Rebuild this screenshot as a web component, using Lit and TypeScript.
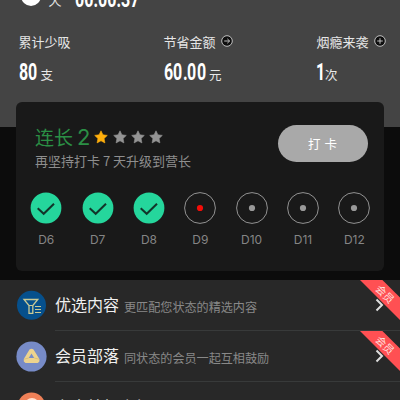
import { LitElement, html, svg, css } from "lit";
import { customElement, property } from "lit/decorators.js";

const FONT = css`"Liberation Sans", "Noto Sans CJK SC", sans-serif`;

@customElement("stat-item")
class StatItem extends LitElement {
  @property() label = "";
  @property() value = "";
  @property() unit = "";
  @property() icon = "";
  static styles = css`
    :host { display: block; color: #f2f2f2; font-family: "Noto Sans CJK SC", sans-serif; }
    .label { display: flex; align-items: center; gap: 5px; height: 20px; font-size: 13px; white-space: nowrap; color: #e6e6e6; }
    .value { display: flex; align-items: baseline; height: 30px; margin-top: 6px; line-height: 30px; }
    .number { display: inline-flex; font: 700 23.5px/30px Roboto, sans-serif; color: #fff; }
    .number span { display: block; width: 9.5px; }
    .number .dot { width: 4.6px; }
    .number .narrow { width: 7px; }
    .number i { display: block; font-style: normal; transform: scaleX(0.68); transform-origin: 0 50%; }
    .narrow i { margin-left: -1px; }
    .unit { font-size: 12.5px; margin-left: 3px; color: #e8e8e8; }
    .tight { margin-left: 1.5px; }
    svg { display: block; }
  `;
  render() {
    const glyph = this.icon === "plus"
      ? svg`<path d="M3.2 6h5.6M6 3.2v5.6" />`
      : svg`<path d="M3.2 6h5.4M6.3 3.8 8.6 6 6.3 8.2" />`;
    return html`
      <div class="label">${this.label}${this.icon
        ? html`<svg width="12" height="12" viewBox="0 0 12 12" fill="#0e0e0e" stroke="#d0d0d0" stroke-width=".9"><circle cx="6" cy="6" r="5.3" />${glyph}</svg>`
        : ""}</div>
      <div class="value">
        <div class="number">${[...this.value].map((c) => html`<span class=${c === "." ? "dot" : c === "1" ? "narrow" : ""}><i>${c}</i></span>`)}</div>
        <span class="unit ${this.value === "1" ? "tight" : ""}">${this.unit}</span>
      </div>`;
  }
}

@customElement("day-mark")
class DayMark extends LitElement {
  @property() day = "";
  @property() status = "";
  static styles = css`
    :host { display: flex; flex-direction: column; align-items: center; font: 12px/16px Inter, ${FONT}; color: #858585; }
    svg { display: block; margin-bottom: 8px; }
  `;
  render() {
    return html`<svg width="32" height="32" viewBox="0 0 32 32">${this.status === "done"
      ? svg`<circle cx="16" cy="16" r="15.4" fill="#25d69c" /><path d="M7.7 16.2 13.7 21.8 24 11.7" fill="none" stroke="#12352a" stroke-width="2" />`
      : svg`<circle cx="16" cy="16" r="15.4" fill="none" stroke="#929292" /><circle cx="16" cy="16" r="3.1" fill=${this.status === "today" ? "#f40d08" : "#999"} />`}</svg>${this.day}`;
  }
}

@customElement("menu-row")
class MenuRow extends LitElement {
  @property() heading = "";
  @property() note = "";
  @property() icon = "";
  @property({ type: Boolean }) member = false;
  static styles = css`
    :host { display: flex; position: relative; height: 51px; padding-left: 16px; font-family: "Noto Sans CJK SC", sans-serif; }
    .icon { display: block; margin-top: 10px; flex: none; }
    .body { flex: 1; display: flex; align-items: center; height: 50px; margin-left: 8px; border-bottom: 1px solid #383a3a; white-space: nowrap; }
    .heading { margin-top: -2px; font-size: 16px; color: #f0f0f0; }
    .note { margin: 2px 0 0 5px; font-size: 12.1px; color: #888; }
    .arrow { margin-left: auto; margin-right: 16px; }
    .ribbon { position: absolute; right: 0; top: 0; width: 40px; height: 40px; background: #ff5053; clip-path: polygon(0 0, 56% 0, 100% 44%, 100% 100%); }
    .ribbon span { position: absolute; left: 4px; top: 6px; width: 42px; text-align: center; font-size: 10.5px; line-height: 16px; color: #ffe4e0; transform: rotate(45deg); }
  `;
  private picture() {
    if (this.icon === "filter")
      return svg`<circle cx="15.5" cy="15.2" r="14.5" fill="#06508c" />
        <g fill="none" stroke="#c9c995" stroke-width="1.3"><path d="M8 9.5h13.8l-5 6v7.8h-3.8v-7.8z" /><path d="M13 15.5h3.8M19 16.5h6M19 19.5h6M19 22.5h6" stroke-width="1" /></g>`;
    if (this.icon === "tribe")
      return svg`<circle cx="15.5" cy="15.5" r="15.1" fill="#778bc7" />
        <path d="M13.5 8.5Q15.5 7 17.5 8.5L23.4 18V20.5L21.8 22H9.5L7.8 20.5V18Z" fill="#edd38e" />
        <path d="M15.5 12.5 18.2 17H12.8Z" fill="#778bc7" /><path d="M8 18.2 12.8 17M18.2 17l5 1.2" stroke="#d4b66e" stroke-width=".7" />`;
    return svg`<circle cx="15.5" cy="14.3" r="13.8" fill="#ee8057" /><circle cx="16" cy="13.5" r="7.5" fill="#ffe1d1" />`;
  }
  render() {
    return html`
      <svg class="icon" width="31" height="31" viewBox="0 0 31 31">${this.picture()}</svg>
      <div class="body">
        <span class="heading">${this.heading}</span><span class="note">${this.note}</span>
        <svg class="arrow" width="9" height="14" viewBox="0 0 9 14" fill="none" stroke="#ddd" stroke-width="2"><path d="M1.5 1.5 7 7 1.5 12.5" /></svg>
      </div>
      ${this.member ? html`<div class="ribbon"><span>会员</span></div>` : ""}`;
  }
}

@customElement("app-root")
class AppRoot extends LitElement {
  static styles = css`
    :host { display: block; width: 400px; height: 400px; overflow: hidden; background: #0c0c0c; font-family: "Noto Sans CJK SC", sans-serif; }
    .top { height: 127px; background: #444; overflow: hidden; }
    .timer { display: flex; align-items: flex-end; height: 6px; padding-left: 20.5px; color: #fff; }
    .avatar { width: 20px; height: 20px; border-radius: 50%; background: #fff; flex: none; }
    .unit { margin: 0 0 -4px 8px; font-size: 13px; line-height: 20px; color: #e6e6e6; }
    .clock { margin: 0 0 -7px 13px; font: 700 24px/28px Roboto, sans-serif; transform: scaleX(.67); transform-origin: 0 50%; }
    .stats { display: grid; grid-template-columns: 145px 153px 1fr; padding: 25px 0 0 18.5px; }
    .card { position: relative; height: 169px; margin: -25px 16px 9px; border-radius: 6px; background: #191919; }
    .head { display: flex; justify-content: space-between; padding: 23px 16.5px 0 19px; }
    .rank { display: flex; align-items: center; height: 24px; font-size: 19px; color: #2b8f45; }
    .rank span { margin-top: -2px; }
    .rank b { font: 400 22px/24px Inter, sans-serif; margin: 0 4px 0 4px; }
    .stars { display: flex; gap: 4.3px; }
    .hint { margin-top: 2px; font-size: 13px; line-height: 20px; color: #8e8e8e; white-space: pre; }
    .button { width: 90px; height: 37px; border: 0; padding: 0; border-radius: 19px; background: #a9a9a9; color: #fff; font: 12.5px "Noto Sans CJK SC", sans-serif; word-spacing: 1px; }
    .days { display: grid; grid-template-columns: repeat(7, 51.35px); padding: 21px 0 0 4.6px; }
    .list { background: #282828; height: 120px; overflow: hidden; }
  `;
  render() {
    const days = [["D6", "done"], ["D7", "done"], ["D8", "done"], ["D9", "today"], ["D10", ""], ["D11", ""], ["D12", ""]];
    return html`
      <div class="top">
        <div class="timer"><div class="avatar"></div><span class="unit">天</span><span class="clock">00:00:37</span></div>
        <div class="stats">
          <stat-item label="累计少吸" value="80" unit="支"></stat-item>
          <stat-item label="节省金额" value="60.00" unit="元" icon="arrow"></stat-item>
          <stat-item label="烟瘾来袭" value="1" unit="次" icon="plus"></stat-item>
        </div>
      </div>
      <div class="card">
        <div class="head">
          <div>
            <div class="rank"><span>连长</span><b>2</b><div class="stars">${[0, 1, 2, 3].map((i) => html`<svg width="14" height="14" viewBox="0 0 14 14"><path d="M7 .8 8.9 4.8 13.3 5.4 10.1 8.5 10.9 12.9 7 10.8 3.1 12.9 3.9 8.5 .7 5.4 5.1 4.8Z" stroke-linejoin="round" stroke-width=".6" stroke=${i ? "#949494" : "#ffaf0c"} fill=${i ? "#949494" : "#ffaf0c"} /></svg>`)}</div></div>
            <div class="hint">再坚持打卡 7 天升级到营长</div>
          </div>
          <button class="button">打 卡</button>
        </div>
        <div class="days">${days.map(([d, s]) => html`<day-mark day=${d} status=${s}></day-mark>`)}</div>
      </div>
      <div class="list">
        <menu-row heading="优选内容" note="更匹配您状态的精选内容" icon="filter" member></menu-row>
        <menu-row heading="会员部落" note="同状态的会员一起互相鼓励" icon="tribe" member></menu-row>
        <menu-row heading="六大特权介绍" icon="badge"></menu-row>
      </div>`;
  }
}
